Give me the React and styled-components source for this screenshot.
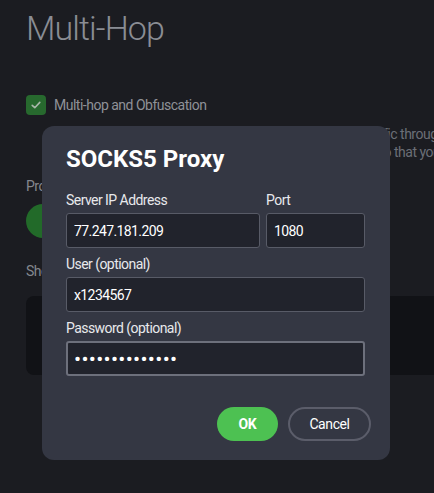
import React from "react";
import styled, { createGlobalStyle } from "styled-components";

const Global = createGlobalStyle`
  html, body { margin: 0; padding: 0; background: #1b1c21; }
  body { font-family: Roboto, "Noto Sans", "Liberation Sans", sans-serif; width: 434px; height: 493px; overflow: hidden; position: relative; }
  * { box-sizing: border-box; }
`;

const Page = styled.div`
  position: relative;
  width: 434px;
  height: 493px;
  padding: 8px 0 0 26px;
  overflow: hidden;
`;

const Title = styled.h1`
  margin: 0;
  font-size: 34px;
  font-weight: 300;
  line-height: 40px;
  color: #8a8d94;
  letter-spacing: -0.9px;
`;

const CheckRow = styled.div`
  display: flex;
  align-items: center;
  gap: 8px;
  margin-top: 47px;
  height: 20px;
`;

const Box = styled.div`
  width: 20px;
  height: 20px;
  border-radius: 4px;
  background: #27692e;
  display: flex;
  align-items: center;
  justify-content: center;
`;

const CheckLabel = styled.span`
  font-size: 14px;
  letter-spacing: -0.5px;
  color: #8f9197;
`;

const Desc = styled.div`
  margin-left: 24px;
  margin-top: 10px;
  font-size: 14px;
  letter-spacing: -0.5px;
  line-height: 18px;
  color: #6b6f77;
  white-space: nowrap;
`;

const SectionLabel = styled.div`
  font-size: 14px;
  letter-spacing: -0.5px;
  color: #84878e;
  margin-top: ${(p) => p.$mt}px;
  line-height: 16px;
`;

const Dot = styled.div`
  width: 34px;
  height: 34px;
  border-radius: 50%;
  background: #226a29;
  margin-top: 10px;
`;

const DarkPanel = styled.div`
  margin-top: 17px;
  height: 79px;
  margin-right: -20px;
  border-radius: 8px;
  background: #111216;
`;

const Dialog = styled.div`
  position: absolute;
  left: 42px;
  top: 126px;
  width: 348px;
  height: 334px;
  border-radius: 12px;
  background: #343743;
  padding: 19px 25px 19px 24px;
  display: flex;
  flex-direction: column;
`;

const DialogTitle = styled.h2`
  margin: 0;
  font-size: 24px;
  line-height: 28px;
  font-weight: 700;
  color: #ffffff;
`;

const Row = styled.div`
  display: flex;
  gap: 6px;
  margin-top: ${(p) => p.$mt || 0}px;
`;

const Field = styled.div`
  display: flex;
  flex-direction: column;
  width: ${(p) => p.$w}px;
  gap: 5px;
`;

const Label = styled.label`
  font-size: 14px;
  letter-spacing: -0.55px;
  line-height: 16px;
  color: #e8e9ec;
`;

const Input = styled.input`
  height: 35px;
  width: 100%;
  background: #21232c;
  border: ${(p) => (p.$focus ? "2px solid #6d707c" : "1px solid #585b67")};
  border-radius: 3px;
  padding: 0 ${(p) => (p.$focus ? 6 : 7)}px;
  color: #ffffff;
  font-family: Roboto, "Noto Sans", sans-serif;
  font-size: ${(p) => (p.$focus ? 21 : 14)}px;
  letter-spacing: ${(p) => (p.$focus ? "0.3px" : "-0.6px")};
  outline: none;
`;

const Buttons = styled.div`
  display: flex;
  justify-content: flex-end;
  gap: 10px;
  margin-top: 31px;
  margin-right: -6px;
`;

const Btn = styled.button`
  height: 34px;
  border-radius: 17px;
  font-family: Roboto, "Noto Sans", sans-serif;
  font-size: 14px;
  letter-spacing: -0.4px;
  color: #ffffff;
  cursor: pointer;
  width: ${(p) => p.$w}px;
  font-weight: ${(p) => (p.$primary ? 700 : 400)};
  background: ${(p) => (p.$primary ? "#4dc152" : "transparent")};
  border: ${(p) => (p.$primary ? "none" : "2px solid #5b5d6a")};
`;

export default function App() {
  return (
    <>
      <Global />
      <Page>
        <Title>Multi-Hop</Title>
        <CheckRow>
          <Box>
            <svg width="12" height="12" viewBox="0 0 12 12">
              <path d="M2.2 6.3 L4.8 8.7 L9.8 3.4" fill="none" stroke="#a9b7aa" strokeWidth="1.6" strokeLinecap="round" strokeLinejoin="round" />
            </svg>
          </Box>
          <CheckLabel>Multi-hop and Obfuscation</CheckLabel>
        </CheckRow>
        <Desc>
          <div>Multi-hop and obfuscation will route all of your internet traffic through</div>
          <div>two separate servers instead of only one and disguises it so that your ISP</div>
        </Desc>
        <SectionLabel $mt={17}>Protocol</SectionLabel>
        <Dot />
        <SectionLabel $mt={25}>Show advanced settings</SectionLabel>
        <DarkPanel />
      </Page>
      <Dialog>
        <DialogTitle>SOCKS5 Proxy</DialogTitle>
        <Row $mt={19}>
          <Field $w={194}>
            <Label>Server IP Address</Label>
            <Input readOnly value="77.247.181.209" />
          </Field>
          <Field $w={99}>
            <Label>Port</Label>
            <Input readOnly value="1080" />
          </Field>
        </Row>
        <Row $mt={8}>
          <Field $w={299}>
            <Label>User (optional)</Label>
            <Input readOnly value="x1234567" />
          </Field>
        </Row>
        <Row $mt={8}>
          <Field $w={299}>
            <Label>Password (optional)</Label>
            <Input $focus type="password" readOnly value="abcdefghijklmn" />
          </Field>
        </Row>
        <Buttons>
          <Btn $primary $w={61}>OK</Btn>
          <Btn $w={83}>Cancel</Btn>
        </Buttons>
      </Dialog>
    </>
  );
}
